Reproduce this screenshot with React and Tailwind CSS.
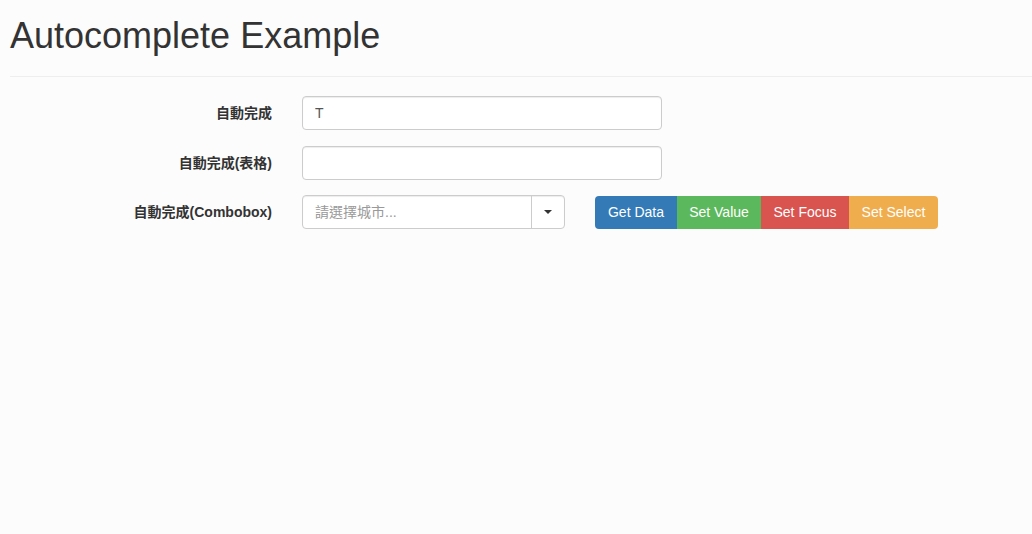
import { useState } from 'react';

const inputCls =
  'h-[34px] rounded border border-[#ccc] bg-white px-3 text-[14px] text-[#555] shadow-[inset_0_1px_1px_rgba(0,0,0,0.075)] outline-none placeholder:text-[#999]';

const FormRow = ({ label, className = 'mb-[16px]', children }) => (
  <div className={`flex items-center ${className}`}>
    <label className="w-[262px] shrink-0 text-right text-[14px] font-bold text-[#333]">{label}</label>
    <div className="ml-[30px] flex items-center">{children}</div>
  </div>
);

const App = () => {
  const [value, setValue] = useState('T');

  return (
    <div
      className="min-h-[534px] bg-[#fcfcfc] pl-[10px] text-[#333]"
      style={{ fontFamily: '"Liberation Sans", Arial, "Noto Sans CJK TC", sans-serif' }}
    >
      <h1 className="pt-[16px] text-[36px] leading-[40px] font-normal">Autocomplete Example</h1>
      <hr className="mt-[20px] mb-[20px] border-t border-[#eee]" />

      <FormRow label="自動完成" className="-mt-px mb-[16px]">
        <input className={`${inputCls} w-[360px]`} value={value} onChange={(e) => setValue(e.target.value)} />
      </FormRow>

      <FormRow label="自動完成(表格)" className="mb-[15px]">
        <input className={`${inputCls} w-[360px]`} />
      </FormRow>

      <FormRow label="自動完成(Combobox)">
        <div className="flex h-[34px] w-[263px] rounded border border-[#ccc] bg-white shadow-[inset_0_1px_1px_rgba(0,0,0,0.075)]">
          <input
            className="h-full min-w-0 flex-1 bg-transparent px-3 text-[14px] text-[#555] outline-none placeholder:text-[#999]"
            placeholder="請選擇城市..."
          />
          <button className="flex h-full w-[33px] items-center justify-center border-l border-[#ccc]">
            <span className="h-0 w-0 border-x-[4px] border-t-[4px] border-x-transparent border-t-[#333]" />
          </button>
        </div>
        <div className="ml-[30px] flex text-[14px] text-white">
          <button className="h-[33px] w-[82px] rounded-l bg-[#337ab7]">Get Data</button>
          <button className="h-[33px] w-[84px] bg-[#5cb85c]">Set Value</button>
          <button className="h-[33px] w-[88px] bg-[#d9534f]">Set Focus</button>
          <button className="h-[33px] w-[89px] rounded-r bg-[#f0ad4e]">Set Select</button>
        </div>
      </FormRow>
    </div>
  );
};

export default App;
